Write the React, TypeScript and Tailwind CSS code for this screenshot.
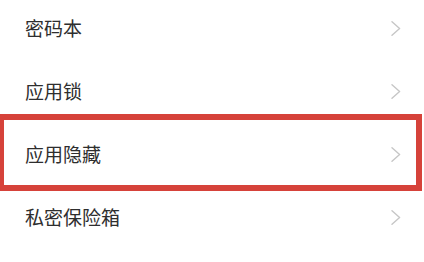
import React from "react";

const items = ["密码本", "应用锁", "应用隐藏", "私密保险箱"];

function Chevron() {
  return (
    <svg width="10" height="15" viewBox="0 0 10 15" fill="none">
      <path d="M1 0.8 L8.6 7.5 L1 14.2" stroke="#c6c6c6" strokeWidth="1.4" strokeLinecap="round" strokeLinejoin="round" />
    </svg>
  );
}

export default function App() {
  return (
    <div
      className="w-[424px] h-[262px] overflow-hidden bg-white"
      style={{ fontFamily: '"Noto Sans CJK SC", "Noto Sans", sans-serif' }}
    >
      <div className="flex flex-col mt-[-5px]">
        {items.map((t, i) => (
          <div key={t} className="relative flex items-center justify-between h-[63px] pl-[25px] pr-[23px]">
            <span className="text-[19px] leading-none text-[#2e2e2e] mt-[1px]">{t}</span>
            <span className="mt-[3px]"><Chevron /></span>
            {i === 2 && (
              <div className="absolute top-[-7px] bottom-[-7px] left-[-2px] right-[2px] border-[6px] border-[#d6423a] pointer-events-none" />
            )}
          </div>
        ))}
      </div>
    </div>
  );
}
